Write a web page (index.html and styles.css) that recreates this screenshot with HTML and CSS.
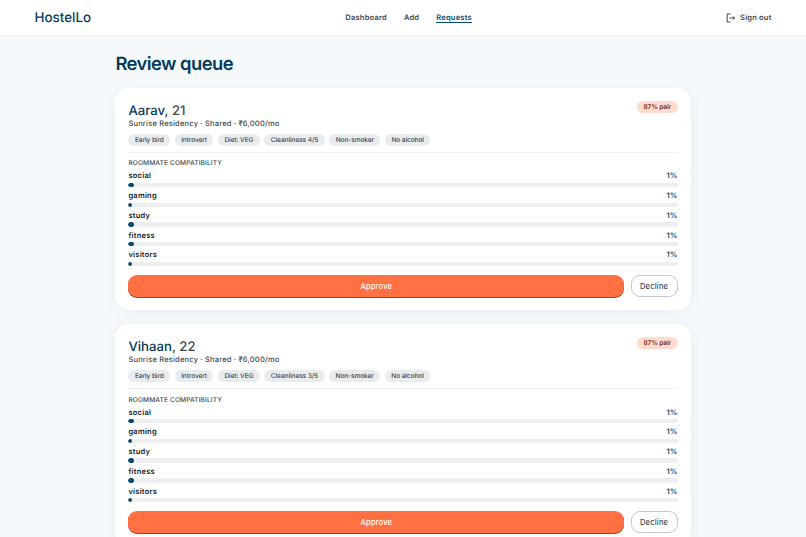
FILE: index.html
```html
<!DOCTYPE html>
<html lang="en">
<head>
  <meta charset="UTF-8" />
  <meta name="viewport" content="width=device-width, initial-scale=1.0"/>
  <title>HostelLo</title>
  <link rel="stylesheet" href="styles.css">
</head>
<body>
  <header class="navbar">
    <a class="logo">HostelLo</a>
    <nav class="nav-links">
      <a>Dashboard</a>
      <a>Add</a>
      <a class="active">Requests</a>
    </nav>
    <a class="sign-out">
      <svg width="10" height="10" viewBox="0 0 10 10" fill="none" stroke="currentColor" stroke-width="1">
        <path d="M4.5 1H1.2v8h3.3M3.5 5h5.5M6.8 3.4L8.5 5 6.8 6.6" />
      </svg>
      <span>Sign out</span>
    </a>
  </header>

  <main class="container">
    <h1>Review queue</h1>
    <div id="queue"></div>
  </main>

  <script>
    const requests = [
      { name: "Aarav", age: 21, cleanliness: 4 },
      { name: "Vihaan", age: 22, cleanliness: 3 }
    ];

    const scores = [
      { label: "social", value: 1 },
      { label: "gaming", value: 0.7 },
      { label: "study", value: 1 },
      { label: "fitness", value: 1 },
      { label: "visitors", value: 0.7 }
    ];

    document.getElementById("queue").innerHTML = requests.map(r => `
      <section class="card">
        <div class="card-header">
          <div>
            <h2><span class="name">${r.name}</span>, ${r.age}</h2>
            <p class="room">Sunrise Residency · Shared · ₹6,000/mo</p>
          </div>
          <span class="badge">87% pair</span>
        </div>
        <div class="chips">
          <span>Early bird</span>
          <span>Introvert</span>
          <span>Diet: VEG</span>
          <span>Cleanliness ${r.cleanliness}/5</span>
          <span>Non-smoker</span>
          <span>No alcohol</span>
        </div>
        <div class="compat">
          <h3>ROOMMATE COMPATIBILITY</h3>
          ${scores.map(s => `
            <div class="score">
              <div class="score-row"><span>${s.label}</span><span class="percent">${Math.round(s.value)}%</span></div>
              <div class="track"><div class="fill" style="width: ${s.value}%"></div></div>
            </div>
          `).join("")}
        </div>
        <div class="actions">
          <button class="approve">Approve</button>
          <button class="decline">Decline</button>
        </div>
      </section>
    `).join("");
  </script>
</body>
</html>
```

FILE: styles.css
```css
* {
  box-sizing: border-box;
}
body {
  margin: 0;
  font-family: Inter, sans-serif;
  background: #f5f9fc;
  color: #43474e;
  text-rendering: geometricPrecision;
}
.navbar {
  display: flex;
  justify-content: space-between;
  align-items: center;
  height: 36px;
  padding: 0 34.5px;
  background: #fff;
  border-bottom: 1px solid #eff1f3;
}
.logo {
  font-size: 13.4px;
  font-weight: 500;
  color: #053b5c;
}
.nav-links {
  display: flex;
  align-items: center;
  gap: 17px;
  font-size: 7.5px;
  font-weight: 600;
  line-height: 9px;
  letter-spacing: 0.22px;
}
.nav-links .active {
  color: #0b4a6f;
  border-bottom: 1.5px solid #0b4a6f;
}
.sign-out {
  display: flex;
  align-items: center;
  gap: 4px;
  font-size: 7.5px;
  font-weight: 600;
  letter-spacing: 0.2px;
}
.container {
  width: 575.2px;
  margin: 0 auto;
  padding-top: 16.5px;
}
h1 {
  margin: 0 0 13.5px;
  font-size: 18.4px;
  font-weight: 600;
  line-height: 22px;
  letter-spacing: -0.56px;
  color: #053b5c;
}
.card {
  height: 222px;
  margin-bottom: 14.2px;
  padding: 13px;
  background: #fff;
  border-radius: 14px;
  box-shadow: 0 2px 12px rgba(11, 74, 111, 0.06);
}
.card-header {
  display: flex;
  justify-content: space-between;
  align-items: flex-start;
}
h2 {
  margin: 1.5px 0 0;
  font-size: 13.2px;
  font-weight: 500;
  line-height: 16px;
}
.name {
  color: #053b5c;
}
.room {
  margin: 0;
  font-size: 7.5px;
  font-weight: 550;
  line-height: 10.4px;
  letter-spacing: 0.2px;
}
.badge {
  padding: 0 6.5px;
  border-radius: 6px;
  background: #ffdbd0;
  color: #7d2b12;
  font-size: 6.6px;
  font-weight: 600;
  line-height: 12px;
  letter-spacing: -0.12px;
}
.chips {
  display: flex;
  gap: 4.5px;
  margin-top: 5.2px;
  padding-bottom: 6px;
  border-bottom: 1px solid #eff1f3;
}
.chips span {
  padding: 0 6.5px;
  border-radius: 6px;
  background: #e9ecef;
  font-size: 6.6px;
  font-weight: 500;
  line-height: 12px;
  letter-spacing: -0.11px;
}
h3 {
  margin: 5.3px 0 3.1px;
  font-size: 6.6px;
  font-weight: 500;
  line-height: 10px;
  letter-spacing: 0.11px;
}
.score {
  height: 19.75px;
}
.score-row {
  display: flex;
  justify-content: space-between;
  font-size: 7.5px;
  font-weight: 600;
  line-height: 10.5px;
  letter-spacing: 0.25px;
  color: #191c1e;
}
.score-row .percent {
  color: #0b4a6f;
}
.track {
  height: 4.4px;
  margin-top: 0.8px;
  border-radius: 3px;
  background: #eceef0;
  overflow: hidden;
}
.fill {
  height: 100%;
  border-radius: 3px;
  background: #0b4a6f;
}
.actions {
  display: flex;
  gap: 6.5px;
  margin-top: 4.4px;
}
button {
  height: 22px;
  padding: 1px 0 0;
  border-radius: 9px;
  font-family: inherit;
  font-size: 7.5px;
  font-weight: 500;
  letter-spacing: 0.2px;
}
.approve {
  flex: 1;
  border: none;
  background: #ff7043;
  color: #fff;
  box-shadow: 0 1px 0 #b33c15;
}
.decline {
  width: 47px;
  border: 1px solid #c2c7cf;
  background: #fff;
  color: #43474e;
}
```
